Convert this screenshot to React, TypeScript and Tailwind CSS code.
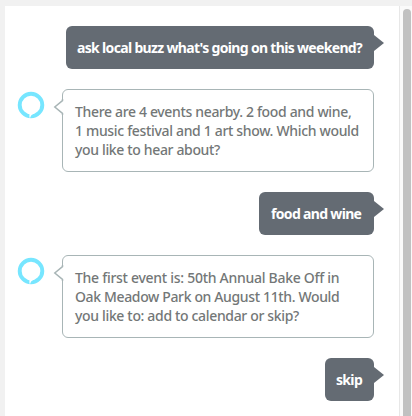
import React from 'react';

type Line = { text: string; className: string };

const AssistantIcon = () => (
  <svg className="mt-0.5 h-7 w-7 shrink-0" viewBox="0 0 28 28" fill="none">
    <circle cx="14" cy="14" r="11.3" stroke="#77e6ff" strokeWidth="3.9" />
    <path d="M12.4 22.4v3.6l.5 1.2 1.2-2.6 3.4-2.5-2.5-.8z" fill="#fff" />
  </svg>
);

const UserMessage = ({ line, width }: { line: Line; width: string }) => (
  <div className={`relative h-[43px] self-end rounded-md bg-[#646b73] pl-[11px] ${width}`}>
    <p className={`whitespace-nowrap text-[14px] font-bold leading-[43px] text-white ${line.className}`}>
      {line.text}
    </p>
    <svg className="absolute -right-[10px] top-[9px] h-4 w-[11px]" viewBox="0 0 11 16">
      <path d="M0 0h1l10 8-10 8H0z" fill="#646b73" />
    </svg>
  </div>
);

const AssistantMessage = ({ lines }: { lines: Line[] }) => (
  <div className="flex h-[83px] items-start">
    <AssistantIcon />
    <div className="relative ml-[17px] h-[83px] w-[312px] rounded-md border border-[#a8b5b6] pl-3 pt-[12px]">
      {lines.map((line) => (
        <p key={line.text} className={`whitespace-nowrap text-[14px] font-medium leading-[19px] text-[#737777] ${line.className}`}>
          {line.text}
        </p>
      ))}
      <svg className="absolute -left-[10px] top-[9px] h-4 w-[11px]" viewBox="0 0 11 16" fill="none">
        <path d="M9 2h2v12H9z" fill="#fff" />
        <path d="M9.5 0v1.6L1.8 8l7.7 6.4V16" stroke="#a8b5b6" strokeWidth="1.5" />
      </svg>
    </div>
  </div>
);

const App = () => {
  return (
    <div className="flex h-[416px] w-[412px] overflow-hidden bg-[#f1f1f1] pl-[5px] pt-[6px] font-['Noto_Sans',sans-serif]">
      {/* Conversation */}
      <div className="flex w-[394px] shrink-0 flex-col gap-5 bg-white pl-3 pr-[25px] pt-5">
        <UserMessage
          width="w-[308px]"
          line={{ text: "ask local buzz what's going on this weekend?", className: 'tracking-[-0.67px]' }}
        />
        <AssistantMessage
          lines={[
            { text: 'There are 4 events nearby. 2 food and wine,', className: 'tracking-[-0.34px]' },
            { text: '1 music festival and 1 art show. Which would', className: 'tracking-[-0.33px]' },
            { text: 'you like to hear about?', className: 'tracking-[-0.35px]' },
          ]}
        />
        <UserMessage width="w-[115px]" line={{ text: 'food and wine', className: 'pl-px tracking-[-0.67px]' }} />
        <AssistantMessage
          lines={[
            { text: 'The first event is: 50th Annual Bake Off in', className: 'tracking-[-0.28px]' },
            { text: 'Oak Meadow Park on August 11th. Would', className: 'tracking-[-0.36px]' },
            { text: 'you like to: add to calendar or skip?', className: 'tracking-[-0.34px]' },
          ]}
        />
        <UserMessage width="w-[49px]" line={{ text: 'skip', className: 'tracking-[-0.67px]' }} />
      </div>

      {/* Scrollbar */}
      <div className="w-[13px] shrink-0 border-l border-[#e7e7e7] bg-[#fafafa] pl-[3px] pt-[3px]">
        <div className="h-[420px] w-2 rounded-full bg-[#c1c1c1]"></div>
      </div>
    </div>
  );
};

export default App;
